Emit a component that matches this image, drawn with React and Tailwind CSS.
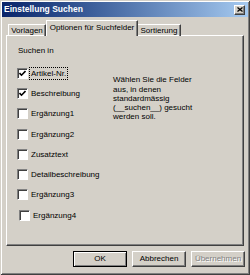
import React from 'react';

const fields = [
  { label: 'Artikel-Nr.', checked: true, focus: true },
  { label: 'Beschreibung', checked: true },
  { label: 'Ergänzung1' },
  { label: 'Ergänzung2' },
  { label: 'Zusatztext' },
  { label: 'Detailbeschreibung' },
  { label: 'Ergänzung3' },
  { label: 'Ergänzung4', shift: true },
];

function CheckBox({ checked }) {
  return (
    <div className="w-[11px] h-[11px] shrink-0 bg-white border-t border-l border-[#808080] border-b border-r border-b-white border-r-white shadow-[inset_1px_1px_0_#404040] flex items-center justify-center">
      {checked && (
        <svg width="7" height="7" viewBox="0 0 7 7">
          <polyline points="0.5,3 2.5,5.2 6.5,1" fill="none" stroke="#000" strokeWidth="1.6" />
        </svg>
      )}
    </div>
  );
}

function Button({ children, primary, disabled }) {
  const base = 'w-[54px] h-[16px] flex items-center justify-center text-[8px] leading-none bg-[#d4d0c8]';
  if (primary) {
    return (
      <div className={`${base} border border-black shadow-[inset_1px_1px_0_#fff,inset_-1px_-1px_0_#808080]`}>
        {children}
      </div>
    );
  }
  return (
    <div
      className={`${base} border-t border-l border-white border-r border-b border-r-[#404040] border-b-[#404040] shadow-[inset_-1px_-1px_0_#808080] ${
        disabled ? 'text-[#808080] [text-shadow:1px_1px_0_#fff]' : 'text-black'
      }`}
    >
      {children}
    </div>
  );
}

export default function App() {
  return (
    <div className="w-[250px] h-[275px] bg-[#d4d0c8] p-[2px] flex flex-col font-['Liberation_Sans',Arial,sans-serif] text-black shadow-[inset_1px_1px_0_#d4d0c8,inset_-1px_-1px_0_#404040,inset_2px_2px_0_#fff,inset_-2px_-2px_0_#808080]">
      {/* Title bar */}
      <div className="h-[15px] flex items-center justify-between bg-linear-to-r from-[#0a246a] to-[#a6caf0]">
        <span className="pl-[2px] text-[8.5px] font-bold text-white leading-none">Einstellung Suchen</span>
        <div className="mr-[3px] w-[11px] h-[10px] bg-[#d4d0c8] border-t border-l border-white border-r border-b border-r-[#404040] border-b-[#404040] shadow-[inset_-1px_-1px_0_#808080] flex items-center justify-center">
          <svg width="6" height="5" viewBox="0 0 6 5">
            <path d="M0.5 0.5 L5.5 4.5 M5.5 0.5 L0.5 4.5" stroke="#000" strokeWidth="1.3" />
          </svg>
        </div>
      </div>

      {/* Tabs + panel */}
      <div className="ml-[4px] w-[238px] mt-[3px] flex flex-col">
        <div className="flex items-end pl-[2px] h-[16px] -mb-px relative z-10">
          <div className="w-[38px] h-[12px] border-t border-l border-white border-r border-r-[#404040] shadow-[inset_-1px_0_0_#808080] flex items-center justify-center text-[8px] leading-none">
            Vorlagen
          </div>
          <div className="w-[92px] h-[16px] bg-[#d4d0c8] border-t border-l border-white border-r border-r-[#404040] shadow-[inset_-1px_0_0_#808080] flex items-center justify-center text-[8px] leading-none pb-[2px]">
            Optionen für Suchfelder
          </div>
          <div className="w-[43px] h-[12px] border-t border-white border-r border-r-[#404040] shadow-[inset_-1px_0_0_#808080] flex items-center justify-center text-[8px] leading-none">
            Sortierung
          </div>
        </div>

        <div className="h-[211px] border-t border-l border-white border-r border-b border-r-[#404040] border-b-[#404040] shadow-[inset_-1px_-1px_0_#808080] pl-[10px] pt-[10px] text-[8px] leading-[9px]">
          <div className="ml-px">Suchen in</div>
          <div className="flex mt-[8px]">
            <div className="w-[96px] flex flex-col">
              {fields.map((f) => (
                <div key={f.label} className={`h-[20.3px] flex items-center ${f.shift ? 'ml-[2px]' : ''}`}>
                  <CheckBox checked={f.checked} />
                  <span
                    className={`ml-[1px] px-[1px] py-[1px] leading-[9px] border border-dotted ${
                      f.focus ? 'border-black' : 'border-transparent'
                    }`}
                  >
                    {f.label}
                  </span>
                </div>
              ))}
            </div>
            <p className="mt-[12.3px] leading-[9.3px]">
              Wählen Sie die Felder
              <br />
              aus, in denen
              <br />
              standardmässig
              <br />
              (__suchen__) gesucht
              <br />
              werden soll.
            </p>
          </div>
        </div>
      </div>

      {/* Buttons */}
      <div className="mt-[5px] flex justify-end gap-[5px] pr-[3px]">
        <Button primary>OK</Button>
        <Button>Abbrechen</Button>
        <Button disabled>Übernehmen</Button>
      </div>
    </div>
  );
}
